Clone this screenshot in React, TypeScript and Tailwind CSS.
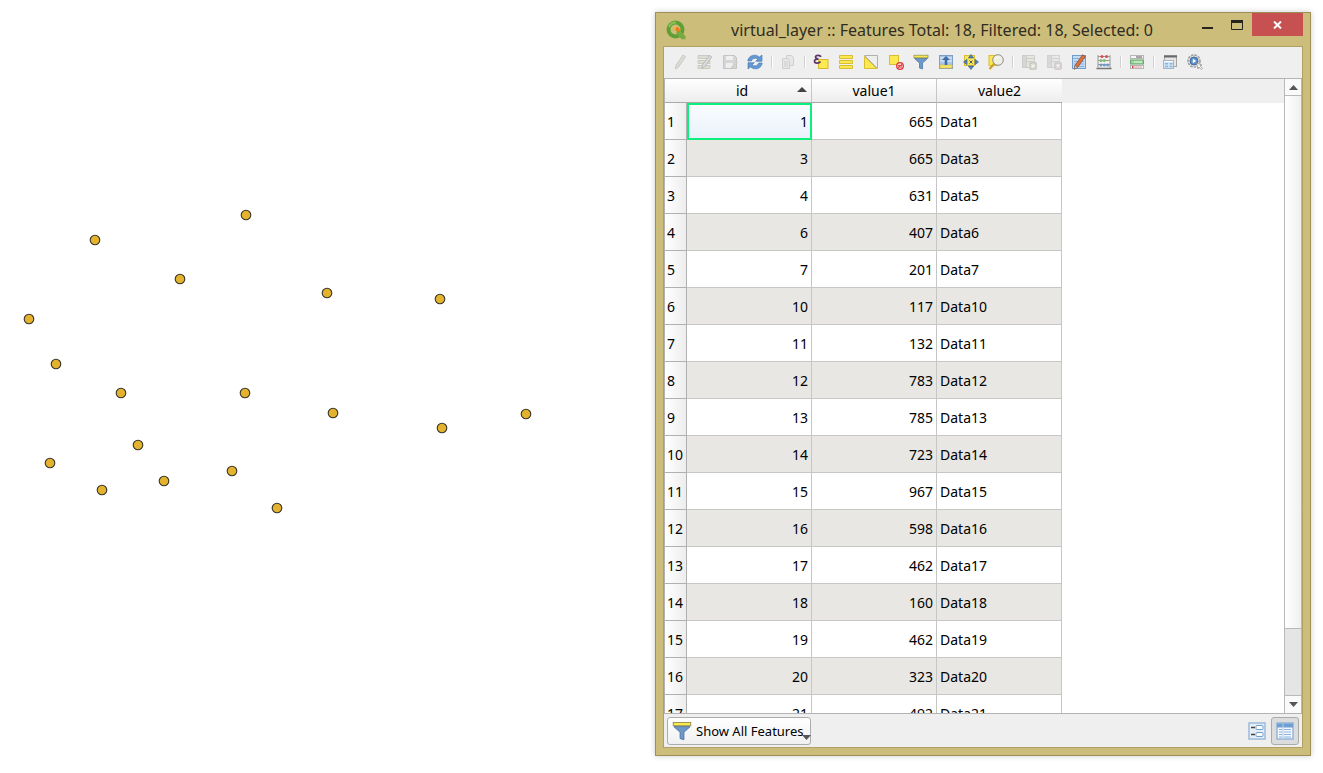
import React from 'react';

const points: [number, number][] = [
    [246, 215], [95, 240], [180, 279], [327, 293], [440, 299], [29, 319],
    [56, 364], [121, 393], [245, 393], [333, 413], [526, 414], [442, 428],
    [138, 445], [50, 463], [232, 471], [164, 481], [102, 490], [277, 508],
];

const rows: [number, number, string][] = [
    [1, 665, 'Data1'],
    [3, 665, 'Data3'],
    [4, 631, 'Data5'],
    [6, 407, 'Data6'],
    [7, 201, 'Data7'],
    [10, 117, 'Data10'],
    [11, 132, 'Data11'],
    [12, 783, 'Data12'],
    [13, 785, 'Data13'],
    [14, 723, 'Data14'],
    [15, 967, 'Data15'],
    [16, 598, 'Data16'],
    [17, 462, 'Data17'],
    [18, 160, 'Data18'],
    [19, 462, 'Data19'],
    [20, 323, 'Data20'],
    [21, 492, 'Data21'],
];

const Pencil = () => (
    <g>
        <path d="M11.5.8l2.7 1.8-7.5 10.6-3.2 2 .6-3.8z" fill="#e2703a" stroke="#8a4a2c" strokeWidth=".8" />
        <path d="M3.5 15.2l.6-3.8 2.6 1.800z" fill="#f0d9b5" stroke="#555" strokeWidth=".5" />
    </g>
);

const Funnel = () => (
    <g>
        <path d="M1.5 4.5h13L9.5 9v6l-3-1V9z" fill="#6d98c9" stroke="#4f79a8" strokeWidth=".8" />
        <rect x="1" y="1.2" width="14" height="2.6" fill="#fce94f" stroke="#8c8a4a" strokeWidth=".7" />
    </g>
);

type Tool = { label: string; disabled?: boolean; icon: React.ReactNode };

const groups: Tool[][] = [
    [
        {
            label: 'Toggle editing mode', disabled: true,
            icon: <path d="M11 1l2.5 1.8-7 10.2-3 2 .5-3.800z" fill="#dcdcd6" stroke="#c8c8c2" />,
        },
        {
            label: 'Toggle multi edit mode', disabled: true,
            icon: (
                <g>
                    <path d="M1 1.5h12v3H1zM1 6.500h12v3H1zM1 11.500h12v3H1z" fill="#deddd2" stroke="#cbcac0" />
                    <path d="M12.5 1.500l2.300 1.500-7 9.500-3 2 .5-3.500z" fill="#dcdcdc" stroke="#bababa" />
                </g>
            ),
        },
        {
            label: 'Save edits', disabled: true,
            icon: (
                <g>
                    <path d="M1.5 1.5h11l2 2v11h-13z" fill="#d6d6d6" stroke="#c4c4c4" />
                    <path d="M4 2h7v4H4zM4 9h7v5H4z" fill="#efefef" />
                    <path d="M13.5 7l2 1-5 6-1.5.5z" fill="#dcd9d0" stroke="#c4c2ba" strokeWidth=".6" />
                </g>
            ),
        },
        {
            label: 'Reload the table',
            icon: (
                <g fill="#6499d3" stroke="#4076b3" strokeWidth=".6">
                    <path d="M.8 7C1.200 3.200 4.300 1 8 1.200c1.800.1 3.200.8 4.300 1.900L15 1v6.300H8.700l2.200-2.200C9 3.700 5.500 3.700 4.300 7z" />
                    <path d="M15.200 9c-.4 3.800-3.500 6-7.200 5.800-1.800-.1-3.200-.8-4.300-1.900L1 15V8.700h6.300l-2.200 2.200c1.900 1.400 5.400 1.400 6.600-1.900z" />
                </g>
            ),
        },
    ],
    [
        {
            label: 'Copy selected rows', disabled: true,
            icon: (
                <g fill="#e6e6e6" stroke="#cfcfcf">
                    <path d="M6.5 1.5h5l2 2v8h-7z" />
                    <path d="M2.5 4.5h5l2 2v8h-7z" />
                    <path d="M4 8h4M4 10h4M4 12h4" />
                </g>
            ),
        },
    ],
    [
        {
            label: 'Select features using an expression',
            icon: (
                <g>
                    <rect x="5.5" y="5.5" width="9.5" height="9" fill="#fce94f" stroke="#d6b92e" />
                    <path d="M7.8 3C7.300.800 2.500.700 2.500 3.100c0 1.300 1.200 1.800 3 1.800C3 5 1.500 5.700 1.500 7.200 1.500 9.800 6 9.800 7.500 7.500" fill="none" stroke="#5c3566" strokeWidth="1.700" />
                </g>
            ),
        },
        {
            label: 'Select all',
            icon: <path d="M1.500 1.500h13v3h-13zM1.500 6.500h13v3h-13zM1.500 11.500h13v3h-13z" fill="#fce94f" stroke="#d9bd33" />,
        },
        {
            label: 'Invert selection',
            icon: (
                <g>
                    <path d="M1.5 1.5h13v13z" fill="#eeeeec" stroke="#b0b0b0" />
                    <path d="M1.5 2.5v12h12z" fill="#fce94f" stroke="#d9bd33" />
                </g>
            ),
        },
        {
            label: 'Deselect all',
            icon: (
                <g>
                    <rect x="1.5" y="1.5" width="9" height="9" fill="#fce94f" stroke="#d9bd33" />
                    <circle cx="12" cy="12" r="3.300" fill="#f6dada" stroke="#d8383c" strokeWidth="1.300" />
                    <path d="M9.8 14.2l4.400-4.400M10 11.500h4M10 13h4" stroke="#d8383c" strokeWidth=".9" />
                </g>
            ),
        },
        { label: 'Filter features', icon: <Funnel /> },
        {
            label: 'Move selection to top',
            icon: (
                <g>
                    <rect x="1.5" y="1.5" width="13" height="13" fill="#a9c6e6" stroke="#7d9fc6" />
                    <path d="M2 4h12M2 7h12" stroke="#e8f1fa" />
                    <rect x="2" y="11" width="12" height="3" fill="#f5e67a" stroke="#d9bd33" strokeWidth=".7" />
                    <path d="M8 2l4 4H9.300v5H6.700V6H4z" fill="#3f6da3" />
                </g>
            ),
        },
        {
            label: 'Pan map to selected rows',
            icon: (
                <g>
                    <rect x="1.5" y="1.5" width="10" height="10" fill="#fce94f" stroke="#d9bd33" />
                    <path d="M8 .5L10.700 4H5.300zM8 15.500L5.300 12h5.400zM.5 8L4 5.300v5.400zM15.500 8L12 10.700V5.300z" fill="#5580b3" stroke="#3f6595" strokeWidth=".7" />
                    <path d="M6.500 6.500l3 3M9.500 6.500l-3 3" stroke="#4a5a68" />
                </g>
            ),
        },
        {
            label: 'Zoom map to selected rows',
            icon: (
                <g>
                    <rect x="1" y="1.5" width="9" height="10" fill="#fce94f" stroke="#d9bd33" />
                    <path d="M6.500 9.500L1.500 15" stroke="#c9a227" strokeWidth="2.200" />
                    <circle cx="10" cy="6" r="5.300" fill="#f0efe4" stroke="#8d8d88" />
                    <path d="M7 4.500c1-1.500 3-2 4.500-1.200" stroke="#fff" fill="none" />
                </g>
            ),
        },
    ],
    [
        {
            label: 'New field', disabled: true,
            icon: (
                <g stroke="#cdcdc9">
                    <path d="M1.500 1.500h12v12h-12z" fill="#e6e6e2" />
                    <path d="M1.500 1.500h4v12h-4z" fill="#d6d6d2" />
                    <path d="M6 4.500h7M6 7.500h7" />
                    <rect x="8.500" y="8.500" width="7" height="7" rx="1" fill="#cbcbbf" />
                    <path d="M12 9.500v5M9.500 12h5M10.300 10.300l3.400 3.400M13.700 10.300l-3.400 3.400" stroke="#f5f5f0" />
                </g>
            ),
        },
        {
            label: 'Delete field', disabled: true,
            icon: (
                <g stroke="#d1d1d1">
                    <path d="M1.500 1.500h12v12h-12z" fill="#e8e8e8" />
                    <path d="M1.500 1.500h4v12h-4z" fill="#d8d8d8" />
                    <path d="M6 4.500h7M6 7.500h7" />
                    <rect x="8.500" y="8.500" width="7" height="7" rx="1" fill="#d6cece" />
                    <path d="M10.500 10.500l3 3M13.500 10.500l-3 3" stroke="#fafafa" strokeWidth="1.300" />
                </g>
            ),
        },
        {
            label: 'Organize columns',
            icon: (
                <g>
                    <rect x="1.500" y="1.500" width="13" height="13" fill="#c3dbf3" stroke="#6e9ccf" />
                    <path d="M2 4.500h12M3 7.500h10M3 10h10M3 12.500h10" stroke="#86aedb" />
                    <Pencil />
                </g>
            ),
        },
        {
            label: 'Open field calculator',
            icon: (
                <g>
                    <path d="M2 1v13M14 1v13M2 2.500h12M2 6.500h12M2 10.500h12" stroke="#9a9a96" fill="none" />
                    <path d="M.5 14.500h15" stroke="#777" strokeWidth="1.500" />
                    <g fill="#dd4b50"><circle cx="6" cy="2.500" r="1.500" /><circle cx="10.500" cy="2.500" r="1.500" /></g>
                    <g fill="#7dbd72"><circle cx="5" cy="6.500" r="1.500" /><circle cx="8.300" cy="6.500" r="1.500" /></g>
                    <g fill="#6f99cb"><circle cx="5" cy="11" r="1.500" /><circle cx="8.300" cy="11" r="1.500" /><circle cx="11.600" cy="11" r="1.500" /></g>
                </g>
            ),
        },
    ],
    [
        {
            label: 'Conditional formatting',
            icon: (
                <g>
                    <rect x="1.500" y="1.500" width="13" height="3" fill="#f7f7f7" stroke="#b5b5b5" />
                    <path d="M7 3h6" stroke="#555" />
                    <rect x="1.500" y="6" width="13" height="4" fill="#98d79b" stroke="#6aa86d" />
                    <path d="M5 8h8" stroke="#e9f7e9" />
                    <rect x="1.500" y="11.500" width="13" height="3" fill="#f7f7f7" stroke="#b5b5b5" />
                    <path d="M3 13h1.500" stroke="#c00" strokeWidth="1.500" />
                    <path d="M5 13h8" stroke="#ef9a9a" />
                </g>
            ),
        },
    ],
    [
        {
            label: 'Dock attribute table',
            icon: (
                <g>
                    <rect x="2.500" y="1.500" width="12" height="11" fill="#e6e6e6" stroke="#a5a5a5" />
                    <path d="M2 2.500h13" stroke="#6a6a6a" strokeWidth="2" />
                    <rect x="1.500" y="6.500" width="10" height="8" fill="#d4e6f6" stroke="#a0b4c6" />
                    <path d="M2 7.500h9" stroke="#fff" />
                    <path d="M3 9.800h3M7.500 9.800h3M3 12.500h3M7.500 12.500h3" stroke="#85b4df" strokeWidth="1.500" />
                </g>
            ),
        },
        {
            label: 'Actions',
            icon: (
                <g>
                    <circle cx="7" cy="7" r="6" fill="#e3e3e3" stroke="#9c9c9c" strokeWidth="1.500" strokeDasharray="2.500 1" />
                    <circle cx="7" cy="7" r="4" fill="#5b8fc9" stroke="#3f6da3" />
                    <path d="M5.800 4.800l3.400 2.200-3.400 2.200z" fill="#fff" />
                    <path d="M9.500 9l5.500 2-2 .8 2.500 2.500-1.200 1.200-2.500-2.500-.8 2z" fill="#fafafa" stroke="#8a8a8a" strokeWidth=".7" />
                </g>
            ),
        },
    ],
];

function Logo() {
    return (
        <svg viewBox="0 0 20 20" className="h-5 w-5" aria-hidden="true">
            <circle cx="9.500" cy="9.500" r="7" fill="none" stroke="#5f9f35" strokeWidth="4" />
            <path d="M3 7C4.200 3.800 7 2.300 10 2.400" fill="none" stroke="#8cc152" strokeWidth="2" />
            <path d="M10.500 10.500h3.500l5.500 5.800v3h-3.800l-5.200-5.300z" fill="#78a940" />
            <path d="M7 7h4.500l2 1.500v4L9 9.800z" fill="#ee7913" />
            <path d="M7 7h3.500L9 10z" fill="#f7b84b" />
        </svg>
    );
}

function MapCanvas() {
    return (
        <section className="min-w-0 flex-1 overflow-hidden" aria-label="Map">
            <svg width="655" height="773" aria-hidden="true">
                {points.map(([x, y]) => (
                    <circle key={`${x}-${y}`} cx={x} cy={y} r="4.800" fill="#e3b32d" stroke="#35312a" strokeWidth="1.100" />
                ))}
            </svg>
        </section>
    );
}

function TitleBar() {
    return (
        <header className="flex h-[33px] shrink-0 items-start">
            <div className="flex h-full w-10 items-center justify-center">
                <Logo />
            </div>
            <h1 className="flex-1 pt-[5px] pr-1 text-center text-base leading-6 text-[#2f2c22]">
                virtual_layer :: Features Total: 18, Filtered: 18, Selected: 0
            </h1>
            <button type="button" aria-label="Minimize" className="flex h-6 w-[30px] items-center justify-center">
                <svg width="12" height="14" aria-hidden="true"><path d="M1 9h11v2H1z" fill="#26241c" /></svg>
            </button>
            <button type="button" aria-label="Maximize" className="flex h-[23px] w-[30px] items-center justify-center">
                <svg width="12" height="10" aria-hidden="true">
                    <path d="M.5.5h11v9H.5z" fill="none" stroke="#26241c" />
                    <path d="M0 0h12v3H0z" fill="#26241c" />
                </svg>
            </button>
            <button type="button" aria-label="Close" className="mr-[7px] flex h-[23px] w-[51px] items-center justify-center bg-[#c75050]">
                <svg width="9" height="8" aria-hidden="true"><path d="M1 .5l7 7M8 .5l-7 7" stroke="#fff" strokeWidth="2" /></svg>
            </button>
        </header>
    );
}

function Toolbar() {
    return (
        <div role="toolbar" className="flex h-[31px] shrink-0 items-center bg-[#efefef] pb-px pl-1">
            {groups.map((group, i) => (
                <React.Fragment key={i}>
                    {i > 0 && (
                        <div className="flex w-2 justify-center">
                            <div className="h-3 w-0.5 border-l border-[#d0d0d0] bg-white" />
                        </div>
                    )}
                    {group.map((tool) => (
                        <button
                            key={tool.label}
                            type="button"
                            aria-label={tool.label}
                            disabled={tool.disabled}
                            className="flex h-6 w-[25px] items-center pl-1"
                        >
                            <svg viewBox="0 0 16 16" className="h-4 w-4" aria-hidden="true">{tool.icon}</svg>
                        </button>
                    ))}
                </React.Fragment>
            ))}
        </div>
    );
}

const Columns = () => (
    <colgroup>
        <col className="w-[22px]" />
        <col className="w-[125px]" />
        <col className="w-[125px]" />
        <col className="w-[125px]" />
    </colgroup>
);

function AttributeTable() {
    const head = 'h-6 border-b border-[#a9a9a9] bg-gradient-to-b from-white to-[#ededed] p-0 font-normal';
    return (
        <div className="min-w-0 flex-1 overflow-hidden bg-white">
            <div className="bg-[#efefef]">
                <table className="w-[397px] table-fixed border-separate border-spacing-0 bg-white text-sm leading-5">
                    <Columns />
                    <thead>
                        <tr>
                            <td className={head} />
                            <th scope="col" aria-sort="ascending" className={`${head} border-r border-r-[#c6c6c6]`}>
                                <span className="flex items-center pr-1">
                                    <span className="flex-1 text-center">id</span>
                                    <svg width="10" height="5" className="mb-0.5" aria-hidden="true"><path d="M0 5l5-5 5 5z" fill="#444" /></svg>
                                </span>
                            </th>
                            <th scope="col" className={`${head} border-r border-r-[#c6c6c6]`}>value1</th>
                            <th scope="col" className={head}>value2</th>
                        </tr>
                    </thead>
                </table>
            </div>
            <table className="w-[397px] table-fixed border-separate border-spacing-0 text-sm leading-5 text-black">
                <Columns />
                <tbody>
                    {rows.map(([id, value1, value2], i) => (
                        <tr key={id} className={i % 2 ? 'bg-[#e8e7e3]' : 'bg-white'}>
                            <th
                                scope="row"
                                className="h-[37px] border-r border-b border-[#b0b0b0] bg-gradient-to-r from-white to-[#ededed] p-0 pt-0.5 pl-0.5 text-left font-normal"
                            >
                                {i + 1}
                            </th>
                            <td
                                className={
                                    i === 0
                                        ? 'border-2 border-[#0bf07c] bg-gradient-to-b from-[#fafcff] to-[#e9f2fc] p-0 pr-0.5 text-right'
                                        : 'border-r border-b border-[#c6c6c6] p-0 pt-0.5 pr-[3px] text-right'
                                }
                            >
                                {id}
                            </td>
                            <td className="border-r border-b border-[#c6c6c6] p-0 pt-0.5 pr-[3px] text-right">{value1}</td>
                            <td className="border-r border-b border-[#c6c6c6] p-0 pt-0.5 pl-[3px]">{value2}</td>
                        </tr>
                    ))}
                </tbody>
            </table>
        </div>
    );
}

function ScrollBar() {
    return (
        <div className="flex w-[18px] shrink-0 flex-col border-x border-[#b9b9b9] bg-[#e5e5e5]">
            <button type="button" aria-label="Scroll up" className="flex h-[17px] items-center justify-center border-b border-[#b9b9b9] bg-[#fafafa]">
                <svg width="9" height="5" aria-hidden="true"><path d="M0 5l4.500-5L9 5z" fill="#555" /></svg>
            </button>
            <div className="flex flex-1 flex-col">
                <div className="h-[89%] border-b border-[#b9b9b9] bg-gradient-to-r from-white to-[#f0f0f0]" />
            </div>
            <button type="button" aria-label="Scroll down" className="flex h-[18px] items-center justify-center border-t border-[#b9b9b9] bg-[#fafafa]">
                <svg width="9" height="5" aria-hidden="true"><path d="M0 0h9L4.500 5z" fill="#555" /></svg>
            </button>
        </div>
    );
}

function Footer() {
    return (
        <footer className="flex h-[33px] shrink-0 items-center bg-[#efefef] pr-[3px] pl-[3px]">
            <button
                type="button"
                className="flex h-7 w-36 items-center rounded-[3px] border border-[#adadad] bg-gradient-to-b from-white to-[#f0f0f0] pl-1 text-[13px] whitespace-nowrap text-black"
            >
                <svg viewBox="0 0 16 16" className="mr-1 h-5 w-5 shrink-0" aria-hidden="true"><Funnel /></svg>
                <span className="pt-0.5">Show All Features</span>
                <svg width="9" height="5" className="mt-3.5 -ml-0.5 shrink-0" aria-hidden="true"><path d="M0 0h9L4.500 5z" fill="#555" /></svg>
            </button>
            <div className="ml-auto flex items-center">
                <button type="button" aria-label="Switch to form view" className="flex h-7 w-7 items-center justify-center">
                    <svg viewBox="0 0 18 18" className="h-[18px] w-[18px]" aria-hidden="true">
                        <rect x="1" y="1" width="16" height="16" fill="#e7eef6" stroke="#9dbbdc" strokeWidth="1.500" />
                        <path d="M3 5.500h4M3 12.500h4" stroke="#444" strokeWidth="1.500" />
                        <rect x="8" y="3.500" width="7" height="4" rx="1" fill="#fff" stroke="#6e9fd3" />
                        <rect x="8" y="10.500" width="7" height="4" rx="1" fill="#fff" stroke="#6e9fd3" />
                    </svg>
                </button>
                <button type="button" aria-label="Switch to table view" aria-pressed="true" className="flex h-7 w-7 items-center justify-center rounded-[3px] border border-[#ababab] bg-[#dcdcdc]">
                    <svg viewBox="0 0 18 18" className="h-[18px] w-[18px]" aria-hidden="true">
                        <rect x="1" y="1" width="16" height="16" fill="#f4f8fc" stroke="#94b6dc" strokeWidth="1.500" />
                        <path d="M1 3.500h16" stroke="#6e9fd3" strokeWidth="4" />
                        <path d="M3 7.500h3.500M8 7.500h7M3 10h3.500M8 10h7M3 12.500h3.500M8 12.500h7M3 15h3.500M8 15h7" stroke="#8cb2dc" />
                        <path d="M7 2v15" stroke="#b7cfe9" />
                    </svg>
                </button>
            </div>
        </footer>
    );
}

export default function App() {
    return (
        <main className="flex h-screen overflow-hidden bg-white font-['Noto_Sans','Open_Sans',sans-serif]">
            <MapCanvas />
            <section className="mt-3 mr-3 mb-[17px] flex w-[656px] shrink-0 flex-col border border-[#9c8f58] bg-[#cdbd7a] shadow-[0_0_6px_rgba(0,0,0,0.2)]">
                <TitleBar />
                <div className="mx-[7px] mb-[7px] flex min-h-0 flex-1 flex-col border border-[#b0a163]">
                    <Toolbar />
                    <div className="flex min-h-0 flex-1 border-y border-l border-[#b3b3b3]">
                        <AttributeTable />
                        <ScrollBar />
                    </div>
                    <Footer />
                </div>
            </section>
        </main>
    );
}
